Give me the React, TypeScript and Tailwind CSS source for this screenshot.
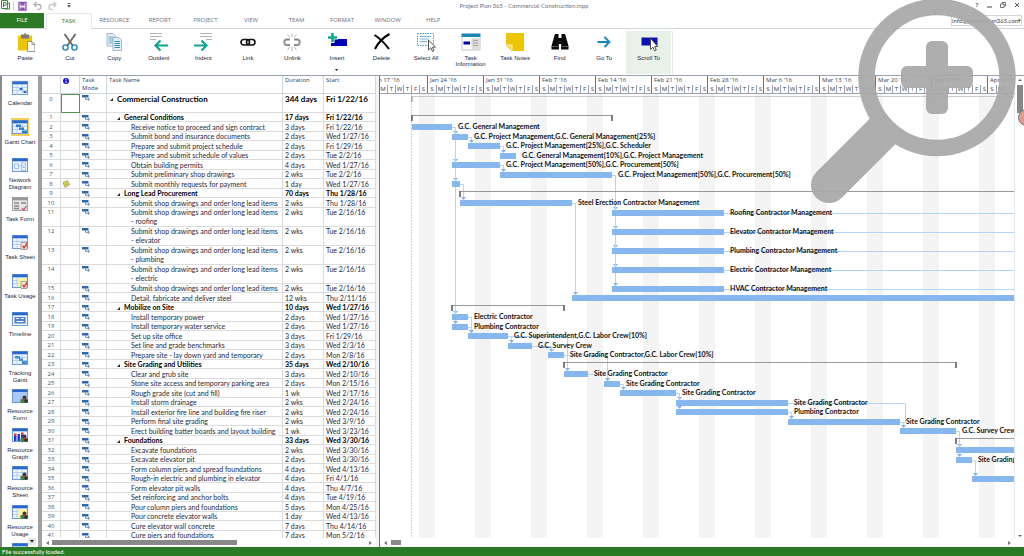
import type { ReactNode } from "react";

type Task = {
  id: number;
  name: string;
  duration: string;
  start: string;
  level: number;
  // working bar or summary bracket, in days counted from Sunday Jan 17
  from?: number;
  to?: number;
  label?: string;
};

const tasks: Task[] = [
  { id: 0, name: "Commercial Construction", duration: "344 days", start: "Fri 1/22/16", level: 0, from: 5, to: 200 },
  { id: 1, name: "General Conditions", duration: "17 days", start: "Fri 1/22/16", level: 1, from: 5, to: 30 },
  { id: 2, name: "Receive notice to proceed and sign contract", duration: "3 days", start: "Fri 1/22/16", level: 2, from: 5, to: 10, label: "G.C. General Management" },
  { id: 3, name: "Submit bond and insurance documents", duration: "2 days", start: "Wed 1/27/16", level: 2, from: 10, to: 12, label: "G.C. Project Management,G.C. General Management[25%]" },
  { id: 4, name: "Prepare and submit project schedule", duration: "2 days", start: "Fri 1/29/16", level: 2, from: 12, to: 16, label: "G.C. Project Management[25%],G.C. Scheduler" },
  { id: 5, name: "Prepare and submit schedule of values", duration: "2 days", start: "Tue 2/2/16", level: 2, from: 16, to: 18, label: "G.C. General Management[10%],G.C. Project Management" },
  { id: 6, name: "Obtain building permits", duration: "4 days", start: "Wed 1/27/16", level: 2, from: 10, to: 16, label: "G.C. Project Management[50%],G.C. Procurement[50%]" },
  { id: 7, name: "Submit preliminary shop drawings", duration: "2 wks", start: "Tue 2/2/16", level: 2, from: 16, to: 30, label: "G.C. Project Management[50%],G.C. Procurement[50%]" },
  { id: 8, name: "Submit monthly requests for payment", duration: "1 day", start: "Wed 1/27/16", level: 2, from: 10, to: 11 },
  { id: 9, name: "Long Lead Procurement", duration: "70 days", start: "Thu 1/28/16", level: 1, from: 11, to: 200 },
  { id: 10, name: "Submit shop drawings and order long lead items", duration: "2 wks", start: "Thu 1/28/16", level: 2, from: 11, to: 25, label: "Steel Erection Contractor Management" },
  { id: 11, name: "Submit shop drawings and order long lead items\n- roofing", duration: "2 wks", start: "Tue 2/16/16", level: 2, from: 30, to: 44, label: "Roofing Contractor Management" },
  { id: 12, name: "Submit shop drawings and order long lead items\n- elevator", duration: "2 wks", start: "Tue 2/16/16", level: 2, from: 30, to: 44, label: "Elevator Contractor Management" },
  { id: 13, name: "Submit shop drawings and order long lead items\n- plumbing", duration: "2 wks", start: "Tue 2/16/16", level: 2, from: 30, to: 44, label: "Plumbing Contractor Management" },
  { id: 14, name: "Submit shop drawings and order long lead items\n- electric", duration: "2 wks", start: "Tue 2/16/16", level: 2, from: 30, to: 44, label: "Electric Contractor Management" },
  { id: 15, name: "Submit shop drawings and order long lead items", duration: "2 wks", start: "Tue 2/16/16", level: 2, from: 30, to: 44, label: "HVAC Contractor Management" },
  { id: 16, name: "Detail, fabricate and deliver steel", duration: "12 wks", start: "Thu 2/11/16", level: 2, from: 25, to: 200 },
  { id: 17, name: "Mobilize on Site", duration: "10 days", start: "Wed 1/27/16", level: 1, from: 10, to: 24 },
  { id: 18, name: "Install temporary power", duration: "2 days", start: "Wed 1/27/16", level: 2, from: 10, to: 12, label: "Electric Contractor" },
  { id: 19, name: "Install temporary water service", duration: "2 days", start: "Wed 1/27/16", level: 2, from: 10, to: 12, label: "Plumbing Contractor" },
  { id: 20, name: "Set up site office", duration: "3 days", start: "Fri 1/29/16", level: 2, from: 12, to: 17, label: "G.C. Superintendent,G.C. Labor Crew[10%]" },
  { id: 21, name: "Set line and grade benchmarks", duration: "3 days", start: "Wed 2/3/16", level: 2, from: 17, to: 20, label: "G.C. Survey Crew" },
  { id: 22, name: "Prepare site - lay down yard and temporary", duration: "2 days", start: "Mon 2/8/16", level: 2, from: 22, to: 24, label: "Site Grading Contractor,G.C. Labor Crew[10%]" },
  { id: 23, name: "Site Grading and Utilities", duration: "35 days", start: "Wed 2/10/16", level: 1, from: 24, to: 73 },
  { id: 24, name: "Clear and grub site", duration: "3 days", start: "Wed 2/10/16", level: 2, from: 24, to: 27, label: "Site Grading Contractor" },
  { id: 25, name: "Stone site access and temporary parking area", duration: "2 days", start: "Mon 2/15/16", level: 2, from: 29, to: 31, label: "Site Grading Contractor" },
  { id: 26, name: "Rough grade site (cut and fill)", duration: "1 wk", start: "Wed 2/17/16", level: 2, from: 31, to: 38, label: "Site Grading Contractor" },
  { id: 27, name: "Install storm drainage", duration: "2 wks", start: "Wed 2/24/16", level: 2, from: 38, to: 52, label: "Site Grading Contractor" },
  { id: 28, name: "Install exterior fire line and building fire riser", duration: "2 wks", start: "Wed 2/24/16", level: 2, from: 38, to: 52, label: "Plumbing Contractor" },
  { id: 29, name: "Perform final site grading", duration: "2 wks", start: "Wed 3/9/16", level: 2, from: 52, to: 66, label: "Site Grading Contractor" },
  { id: 30, name: "Erect building batter boards and layout building", duration: "1 wk", start: "Wed 3/23/16", level: 2, from: 66, to: 73, label: "G.C. Survey Crew" },
  { id: 31, name: "Foundations", duration: "33 days", start: "Wed 3/30/16", level: 1, from: 73, to: 200 },
  { id: 32, name: "Excavate foundations", duration: "2 wks", start: "Wed 3/30/16", level: 2, from: 73, to: 87 },
  { id: 33, name: "Excavate elevator pit", duration: "2 days", start: "Wed 3/30/16", level: 2, from: 73, to: 75, label: "Site Grading Contractor" },
  { id: 34, name: "Form column piers and spread foundations", duration: "4 days", start: "Wed 4/13/16", level: 2 },
  { id: 35, name: "Rough-in electric and plumbing in elevator", duration: "4 days", start: "Fri 4/1/16", level: 2, from: 75, to: 81 },
  { id: 36, name: "Form elevator pit walls", duration: "4 days", start: "Thu 4/7/16", level: 2 },
  { id: 37, name: "Set reinforcing and anchor bolts", duration: "4 days", start: "Tue 4/19/16", level: 2 },
  { id: 38, name: "Pour column piers and foundations", duration: "5 days", start: "Mon 4/25/16", level: 2 },
  { id: 39, name: "Pour concrete elevator walls", duration: "1 day", start: "Wed 4/13/16", level: 2 },
  { id: 40, name: "Cure elevator wall concrete", duration: "7 days", start: "Thu 4/14/16", level: 2 },
  { id: 41, name: "Cure piers and foundations", duration: "7 days", start: "Mon 5/2/16", level: 2 },
];

// finish-to-start links between tasks
const links: [number, number][] = [
  [2, 3], [2, 6], [2, 8], [2, 18], [2, 19], [3, 4], [4, 5], [6, 7],
  [7, 11], [7, 12], [7, 13], [7, 14], [7, 15], [8, 10], [10, 16],
  [18, 20], [19, 20], [20, 21], [20, 24], [21, 22], [22, 25], [24, 25],
  [25, 26], [26, 27], [26, 28], [28, 29], [29, 30], [30, 32], [30, 33], [33, 35],
];

// the scale opens on a Monday and closes on a Tuesday
const weeks = [
  { name: "Jan 17 '16", days: "MTWTFS" },
  { name: "Jan 24 '16", days: "SMTWTFS" },
  { name: "Jan 31 '16", days: "SMTWTFS" },
  { name: "Feb 7 '16", days: "SMTWTFS" },
  { name: "Feb 14 '16", days: "SMTWTFS" },
  { name: "Feb 21 '16", days: "SMTWTFS" },
  { name: "Feb 28 '16", days: "SMTWTFS" },
  { name: "Mar 6 '16", days: "SMTWTFS" },
  { name: "Mar 13 '16", days: "SMTWTFS" },
  { name: "Mar 20 '16", days: "SMTWTFS" },
  { name: "Mar 27 '16", days: "SMTWTFS" },
  { name: "Apr 3 '16", days: "SMT" },
];

// rows alternate between 10 and 9 pixels, a wrapped name takes two of them
const rows: { top: number; height: number }[] = [];
let slot = 0;
let top = 0;
for (const task of tasks) {
  const lines = task.id === 0 || task.name.includes("\n") ? 2 : 1;
  const height = lines === 2 ? 19 : slot % 2 === 0 ? 9 : 10;
  if (task.id !== 0) slot += lines;
  rows.push({ top, height });
  top += height;
}

const dayX = (day: number) => day * 8 - 8;
const barY = (id: number) => rows[id].top + 2;

function ModeIcon() {
  return (
    <svg className="block h-[6px] w-2" viewBox="0 0 8 6">
      <path d="M0 0h6.500v2.500H0z" fill="#2f6aa8" />
      <path d="M3.500 2.500v1.800h3.500M5.800 2.800 7.500 4.300 5.800 5.800" fill="none" stroke="#4a6f93" strokeWidth="0.8" />
    </svg>
  );
}

function NoteIcon() {
  return (
    <svg className="block h-2 w-2" viewBox="0 0 8 8">
      <path d="M1 2.400 5.400.600 7.400 4.800 3 7.400z" fill="#e6e060" stroke="#8d8a2a" strokeWidth="0.7" />
      <path d="M2.600 3.400 5 2.400M3.200 5 5.600 3.900" stroke="#8d8a2a" strokeWidth="0.6" />
    </svg>
  );
}

function ToolIcon({ children }: { children: ReactNode }) {
  return (
    <svg className="block h-5 w-5" viewBox="0 0 20 20" fill="none">
      {children}
    </svg>
  );
}

const tools: { name: string; icon: ReactNode; menu?: boolean; active?: boolean }[] = [
  {
    name: "Paste",
    icon: (
      <>
        <path d="M3 3.500h14v15H3z" fill="#ecc600" />
        <path d="M6 2.500h2.500L10 1l1.500 1.500H14v4H6z" fill="#7b7b7b" />
        <path d="M12.500 9.500h4.500l3 3v7h-7.500z" fill="#fff" stroke="#7d7d7d" strokeWidth="0.8" />
        <path d="M17 9.500v3h3" stroke="#7d7d7d" strokeWidth="0.8" />
      </>
    ),
  },
  {
    name: "Cut",
    icon: (
      <>
        <path d="M4.500 2 13 14M15.500 2 7 14" stroke="#6e6e6e" strokeWidth="2" />
        <circle cx="5.500" cy="15.500" r="2.600" stroke="#1e84b8" strokeWidth="1.400" />
        <circle cx="14.500" cy="15.500" r="2.600" stroke="#1e84b8" strokeWidth="1.400" />
      </>
    ),
  },
  {
    name: "Copy",
    icon: (
      <>
        <path d="M3 1.500h6l2.500 2.500v10H3z" fill="#e4f0f8" stroke="#8fa9b8" strokeWidth="0.8" />
        <path d="M4.500 5h5M4.500 7h5M4.500 9h5M4.500 11h4" stroke="#4c9cc6" strokeWidth="0.8" />
        <path d="M9 5.500h6l2.500 2.500v10.500H9z" fill="#e4f0f8" stroke="#8fa9b8" strokeWidth="0.8" />
        <path d="M10.500 9.500h5.500M10.500 11.500h5.500M10.500 13.500h5.500M10.500 15.500h5.500" stroke="#1e84b8" strokeWidth="0.9" />
      </>
    ),
  },
  {
    name: "Outdent",
    icon: (
      <>
        <path d="M1 1.500h12M1 4.500h12M1 7.500h6" stroke="#b5b5b5" strokeWidth="1" />
        <path d="M19 13.500H6.500M11.500 8.500l-5 5 5 5" stroke="#0fa594" strokeWidth="2.200" />
      </>
    ),
  },
  {
    name: "Indent",
    icon: (
      <>
        <path d="M7 1.500h12M7 4.500h12M13 7.500h6" stroke="#b5b5b5" strokeWidth="1" />
        <path d="M1 13.500h12.500M8.500 8.500l5 5-5 5" stroke="#0fa594" strokeWidth="2.200" />
      </>
    ),
  },
  {
    name: "Link",
    icon: (
      <>
        <rect x="3" y="7.500" width="8.500" height="5.500" rx="2.700" stroke="#111" strokeWidth="1.700" />
        <rect x="8.500" y="7.500" width="8.500" height="5.500" rx="2.700" stroke="#111" strokeWidth="1.700" />
      </>
    ),
  },
  {
    name: "Unlink",
    icon: (
      <>
        <path d="M8 7.500H5a2.700 2.700 0 0 0 0 5.500h3M12 7.500h3a2.700 2.700 0 0 1 0 5.500h-3" stroke="#8c8c8c" strokeWidth="1.800" />
        <path d="M10 1.500v4M10 15v4M5.500 2.500l2 3M14.500 2.500l-2 3M5.500 18l2-3M14.500 18l-2-3" stroke="#a5a5a5" strokeWidth="0.800" />
      </>
    ),
  },
  {
    name: "Insert",
    menu: true,
    icon: (
      <>
        <path d="M4 7h16v7H4z" fill="#0000b4" />
        <path d="M5.500 0v11M0 5.500h11" stroke="#fff" strokeWidth="4" />
        <path d="M5.500 1v9M1 5.500h9" stroke="#0fa594" strokeWidth="2.600" />
      </>
    ),
  },
  {
    name: "Delete",
    icon: <path d="M2.500 3c5 3 10 8 14.500 14M17.500 2C12 5 6 11 3 17" stroke="#000" strokeWidth="2" />,
  },
  {
    name: "Select All",
    icon: (
      <>
        <path d="M1.500 1.500h16v12h-16z" stroke="#2b93c0" strokeWidth="0.9" strokeDasharray="1.500 1" />
        <path d="M4 4.500h11M4 7h9M4 9.500h7" stroke="#5fb0d4" strokeWidth="0.9" />
        <path d="M12.500 8v10l2.300-2.200 1.600 3.600 1.600-.8-1.600-3.400h3.100z" fill="#fff" stroke="#444" strokeWidth="0.9" />
      </>
    ),
  },
  {
    name: "Task Information",
    icon: (
      <>
        <path d="M1 2h18v16H1z" fill="#fff" stroke="#b5b5b5" strokeWidth="0.8" />
        <path d="M.6 1.600h18.800v3.400H.6z" fill="#1786bb" />
        <path d="M10.500 6h8v11.500h-8z" fill="#dcdcdc" />
        <path d="M2.500 9.500H9v3H2.500z" fill="#0000b4" />
        <path d="M12 8.500h5M12 11h5M12 13.500h5" stroke="#999" strokeWidth="0.8" />
      </>
    ),
  },
  {
    name: "Task Notes",
    icon: (
      <>
        <path d="M1 1h18v18H6.500L1 13.500z" fill="#ecc600" />
        <path d="M1.500 13h5.500v5.500" fill="#f6de5c" stroke="#fff" strokeWidth="0.800" />
      </>
    ),
  },
  {
    name: "Find",
    icon: (
      <>
        <path d="M5 2h3.500v3l.5 12.500H1.500V14L4 5zM15 2h-3.500v3l-.5 12.500h7.500V14L16 5z" fill="#0a0a0a" />
        <path d="M8 6h4v6H8z" fill="#0a0a0a" />
        <path d="M2 14.500h6.500M11.500 14.500H18" stroke="#777" strokeWidth="0.700" />
      </>
    ),
  },
  {
    name: "Go To",
    icon: <path d="M3.500 10h12M10.500 5l5 5-5 5" stroke="#1786bb" strokeWidth="1.800" />,
  },
  {
    name: "Scroll To",
    active: true,
    icon: (
      <>
        <path d="M2.500 5.500h16v8h-16z" fill="#0c12b4" />
        <path d="M11.500 6.500v11l2.400-2.300 1.700 3.600 1.700-.8-1.700-3.500h3.200z" fill="#fff" stroke="#444" strokeWidth="0.9" />
      </>
    ),
  },
];

const tabs = ["TASK", "RESOURCE", "REPORT", "PROJECT", "VIEW", "TEAM", "FORMAT", "WINDOW", "HELP"];

function ViewWindow({ muted, children }: { muted?: boolean; children?: ReactNode }) {
  return (
    <svg className="block h-[16px] w-[16px] shrink-0" viewBox="0 0 16 16" fill="none">
      <rect x="0.5" y="1.500" width="15" height="13" fill={muted ? "#e4e4e4" : "#eef5ff"} stroke={muted ? "#9a9a9a" : "#5f92d8"} strokeWidth="0.9" />
      <path d="M.5 1.500h15v2.800H.5z" fill={muted ? "#9a9a9a" : "#2867cc"} />
      {children}
    </svg>
  );
}

const gridLines = <path d="M1 7.500h14M1 10.500h14M5 4.500v10M10 4.500v10" stroke="#a8c6f0" strokeWidth="0.8" />;

const redCheck = (
  <>
    <path d="M9 8.500h6v7H9z" fill="#f3efe4" stroke="#8f7c6a" strokeWidth="0.700" />
    <path d="m10.500 11.500 1.500 2.500 3-4.500" stroke="#d8382c" strokeWidth="1.400" />
  </>
);

const people = (
  <>
    <circle cx="12.500" cy="9.500" r="2" fill="#3a3a3a" />
    <circle cx="10.500" cy="13" r="2.300" fill="#3e8a3a" />
    <circle cx="14" cy="13" r="2" fill="#333" />
    <circle cx="12.200" cy="11.500" r="1" fill="#c23a2e" />
  </>
);

const views: { name: string; icon: ReactNode; active?: boolean }[] = [
  {
    name: "Calendar",
    icon: (
      <ViewWindow>
        {gridLines}
        <path d="M3 .5v2M6 .5v2M9 .5v2M12 .5v2" stroke="#7f9cc8" strokeWidth="1" />
        <path d="M7.500 8h3v2h-3zM11.500 11h3v2h-3z" fill="#2867cc" />
      </ViewWindow>
    ),
  },
  {
    name: "Gantt Chart",
    active: true,
    icon: (
      <ViewWindow>
        {gridLines}
        <path d="M4 5.500h5v2.500H4zM7 8.500h5V11H7zM10 11.500h5V14h-5z" fill="#2f7fd0" />
      </ViewWindow>
    ),
  },
  {
    name: "Network Diagram",
    icon: (
      <ViewWindow>
        <path d="M2.500 7h4v4.500h-4zM9.500 6h4v3h-4zM9.500 10.500h4v3h-4zM6.500 9h3" stroke="#8db4ea" strokeWidth="0.8" />
      </ViewWindow>
    ),
  },
  {
    name: "Task Form",
    icon: (
      <ViewWindow muted>
        <path d="M2 7h5M9 7h5M2 10h5M2 12.500h5" stroke="#8a8a8a" strokeWidth="1.500" />
        <path d="m10 12 1.500 2 3-4" stroke="#c2485a" strokeWidth="1.200" />
      </ViewWindow>
    ),
  },
  { name: "Task Sheet", icon: <ViewWindow>{gridLines}{redCheck}</ViewWindow> },
  {
    name: "Task Usage",
    icon: (
      <ViewWindow>
        {gridLines}
        <path d="M6 5h9v9H6z" fill="#f8f4ac" />
        {redCheck}
      </ViewWindow>
    ),
  },
  {
    name: "Timeline",
    icon: (
      <ViewWindow>
        <path d="M2.500 6h11v6.500h-11z" fill="#4f7fc4" />
        <path d="M4 7.500h3M9 7.500h3M4.500 10.500h7" stroke="#fff" strokeWidth="1.200" />
      </ViewWindow>
    ),
  },
  {
    name: "Tracking Gantt",
    icon: (
      <ViewWindow>
        {gridLines}
        <path d="M3 6h5v2.500H3zM7 8.500h4V11H7zM10 11h5v3h-5z" fill="#3f8fdc" />
      </ViewWindow>
    ),
  },
  {
    name: "Resource Form",
    icon: (
      <ViewWindow>
        <path d="M1 5h14v9H1z" fill="#a9c8f4" />
        {people}
      </ViewWindow>
    ),
  },
  {
    name: "Resource Graph",
    icon: (
      <ViewWindow>
        <path d="M2 9h2.500v5H2zM5.500 7H8v7H5.500zM9 8h2.500v6H9z" fill="#1c3fd0" />
        <path d="M2 6.500h2.500V9H2zM9 5.500h2.500V8H9z" fill="#e0342c" />
        {people}
      </ViewWindow>
    ),
  },
  { name: "Resource Sheet", icon: <ViewWindow>{gridLines}{people}</ViewWindow> },
  {
    name: "Resource Usage",
    icon: (
      <ViewWindow>
        {gridLines}
        <path d="M6 5h9v9H6z" fill="#f8f4ac" />
        {people}
      </ViewWindow>
    ),
  },
  { name: "", icon: <ViewWindow /> },
];

function TitleBar() {
  return (
    <header className="flex h-[13px] shrink-0 items-start justify-between">
      <div className="flex w-[90px] items-center">
        <svg className="ml-px h-[11px] w-[9px]" viewBox="0 0 9 11" fill="none">
          <path d="M.5.500h6v8h-6z" fill="#fff" stroke="#3f8d45" />
          <path d="M2.500 7V2.500h1.500a1.300 1.300 0 0 1 0 2.700H2.500M6.500 3h2v6h-5" stroke="#2b7a26" strokeWidth="0.900" />
        </svg>
        <span className="ml-[3px] h-[9px] w-px bg-gray-300" />
        <button aria-label="Save" className="ml-1">
          <svg className="block h-[10px] w-[9px]" viewBox="0 0 9 10" fill="none">
            <path d="M1 1.500h7v7.500H1z" fill="#f2ebf8" stroke="#8c50b4" strokeWidth="1.300" />
            <path d="M2.500 1.500h4v3h-4zM2.500 6.500h4V9h-4z" fill="#8c50b4" />
          </svg>
        </button>
        <button aria-label="Undo" className="ml-1.5">
          <svg className="block h-[10px] w-[9px]" viewBox="0 0 9 10" fill="none" stroke="#b4b4b4" strokeWidth="1.300">
            <path d="M3.500 1 1 3.500 3.500 6M1 3.500h4.500a2.500 2.500 0 0 1 0 5H4.500" />
          </svg>
        </button>
        <button aria-label="Redo" className="ml-1.5">
          <svg className="block h-[10px] w-[9px]" viewBox="0 0 9 10" fill="none" stroke="#c8c8c8" strokeWidth="1.300">
            <path d="M5.500 1 8 3.500 5.500 6M8 3.500H3.500a2.500 2.500 0 0 0 0 5h1" />
          </svg>
        </button>
        <button aria-label="Customize toolbar" className="ml-2.5">
          <svg className="block h-[5px] w-[4px]" viewBox="0 0 4 5">
            <path d="M.5 0h3v.800h-3zM0 2.200h4L2 4.500z" fill="#444" />
          </svg>
        </button>
      </div>
      <h1 className="font-['Lato',sans-serif] text-[6px] leading-[11px] text-gray-500">Project Plan 365 - Commercial Construction.mpp</h1>
      <div className="flex w-[66px] items-center justify-end gap-2 pr-1 text-gray-500">
        <button aria-label="Help" className="w-1 text-[6px] leading-[10px] font-bold">?</button>
        <button aria-label="Minimize">
          <svg className="block h-[6px] w-[5px]" viewBox="0 0 5 6"><path d="M0 5h5" stroke="#444" /></svg>
        </button>
        <button aria-label="Restore">
          <svg className="block h-[6px] w-[6px]" viewBox="0 0 6 6" fill="none" stroke="#555" strokeWidth="0.800">
            <path d="M.5 2h3.500v3.500H.5zM2 2V.500h3.500V4H4" />
          </svg>
        </button>
        <button aria-label="Close">
          <svg className="block h-[6px] w-[6px]" viewBox="0 0 6 6" stroke="#444" strokeWidth="0.900"><path d="M1 1l4 4M5 1 1 5" /></svg>
        </button>
      </div>
    </header>
  );
}

function TabBar() {
  return (
    <nav className="flex h-4 shrink-0 items-stretch border-b border-gray-300 text-[6px]">
      <button className="w-11 bg-[#2b7a26] text-white">FILE</button>
      <div className="ml-0.5 grid w-[410px] grid-cols-9">
        {tabs.map((tab) => (
          <button
            key={tab}
            className={
              tab === "TASK"
                ? "-mb-px border-x border-t border-gray-200 bg-white text-[#2b7a26]"
                : "text-gray-500"
            }
          >
            {tab}
          </button>
        ))}
      </div>
      <div className="flex-1" />
      <div className="relative mt-0.5 mr-0.5 h-[11px] w-[71px]">
        <select aria-label="Account" className="block h-full w-full appearance-none border border-gray-300 bg-white font-['Lato',sans-serif] text-[6px] leading-[9px] text-gray-700">
          <option>info@projectplan365.com</option>
        </select>
        <svg className="pointer-events-none absolute top-1 right-px h-[3px] w-[3px]" viewBox="0 0 4 3"><path d="M0 0h4L2 2.500z" fill="#333" /></svg>
      </div>
    </nav>
  );
}

function Ribbon() {
  return (
    <div className="flex h-[47px] shrink-0 border-b border-gray-400 pt-0.5 pb-px pl-[3px]">
      <div className="grid w-[668px] grid-cols-15">
        {tools.map((tool) => (
          <button
            key={tool.name}
            className={
              tool.active
                ? "flex flex-col items-center bg-[#e8f2e8] pt-px text-gray-800"
                : "flex flex-col items-center pt-px text-gray-800"
            }
          >
            <ToolIcon>{tool.icon}</ToolIcon>
            <span className="mt-[3px] w-9 font-['Liberation_Sans',sans-serif] text-[6px] leading-[6px]">{tool.name}</span>
            {tool.menu && (
              <svg className="mt-2 h-[2px] w-[3px]" viewBox="0 0 3 2"><path d="M0 0h3L1.500 2z" fill="#111" /></svg>
            )}
          </button>
        ))}
      </div>
      <span className="ml-px w-px bg-gray-200" />
    </div>
  );
}

function ViewBar() {
  return (
    <aside className="relative flex w-[42px] shrink-0 flex-col overflow-hidden border-r-4 border-l-2 border-r-[#a0a0a0] border-l-[#8a8a8a] bg-white pt-[3px]">
      {views.map((view, i) => (
        <button key={i} className="flex shrink-0 flex-col items-center odd:h-[39px] even:h-[38px]">
          <span className={view.active ? "bg-[#f6cf58] p-px" : "p-px"}>{view.icon}</span>
          <span className="mt-[3px] w-9 font-['Liberation_Sans',sans-serif] text-[6px] leading-[7px] text-gray-800">{view.name}</span>
        </button>
      ))}
      <button aria-label="More views" className="absolute right-0.5 bottom-0.5 flex h-[7px] w-[8px] items-center justify-center bg-gray-200">
        <svg className="h-[3px] w-[4px]" viewBox="0 0 4 3"><path d="M0 0h4L2 2.500z" fill="#111" /></svg>
      </button>
    </aside>
  );
}

function TaskTable() {
  const head = "border-r border-b border-gray-300 px-0.5 text-left align-top text-[6px] font-normal leading-[8px] text-gray-700";
  const cell = "border-r border-b border-[#dcdcdc] py-0 whitespace-pre";
  return (
    <div className="flex w-[334px] shrink-0 flex-col">
      <div className="min-h-0 flex-1 overflow-hidden">
        <table className="w-full table-fixed border-separate border-spacing-0 font-['Lato',sans-serif] text-[7px]">
          <colgroup>
            <col className="w-[19px]" />
            <col className="w-[19px]" />
            <col className="w-[27px]" />
            <col className="w-[176px]" />
            <col className="w-[41px]" />
            <col className="w-[52px]" />
          </colgroup>
          <thead className="font-['Open_Sans',sans-serif]">
            <tr className="h-[18px]">
              <th className={head} aria-label="ID" />
              <th className={head}>
                <svg className="mt-0.5 block h-[6px] w-[6px]" viewBox="0 0 6 6">
                  <circle cx="3" cy="3" r="3" fill="#1212d8" />
                  <path d="M3 1v1M3 2.600V5" stroke="#fff" strokeWidth="1" />
                </svg>
              </th>
              <th className={head}>Task Mode</th>
              <th className={head}>Task Name</th>
              <th className={head}>Duration</th>
              <th className={head}>Start</th>
            </tr>
          </thead>
          <tbody>
            {tasks.map((task, i) => {
              const first = task.level === 0;
              const weight = task.level < 2 ? "font-bold text-black" : "text-gray-800";
              const lead = first ? "align-top leading-[11px]" : rows[i].height === 19 ? "align-top leading-[9px]" : "align-middle leading-[8px]";
              const size = first ? "text-[8px]" : "text-[7px]";
              return (
                <tr key={task.id} style={{ height: rows[i].height }}>
                  <td className={`${cell} ${lead} text-center font-['Open_Sans',sans-serif] text-[6px] text-gray-600`}>{task.id}</td>
                  <td className={first ? "border border-[#4f9450]" : `${cell} ${lead} pl-px`}>{task.id === 8 && <NoteIcon />}</td>
                  <td className={`${cell} ${lead} pt-px pl-0.5`}><ModeIcon /></td>
                  <td className={`${cell} ${lead} ${size} ${weight} ${first ? "pl-[3px]" : task.level === 1 ? "pl-[10px]" : "pl-[24px]"}`}>
                    {task.level < 2 && (
                      <svg className="mr-1 inline-block h-[3px] w-[3px] align-middle" viewBox="0 0 3 3"><path d="M3 0v3H0z" fill="#222" /></svg>
                    )}
                    {task.name}
                  </td>
                  <td className={`${cell} ${lead} ${size} ${weight} pl-0.5`}>{task.duration}</td>
                  <td className={`${cell} ${lead} ${size} ${weight} pl-0.5`}>{task.start}</td>
                </tr>
              );
            })}
          </tbody>
        </table>
      </div>
      <div className="flex h-[9px] shrink-0 items-center gap-[3px] px-1">
        <svg className="h-[4px] w-[3px]" viewBox="0 0 3 4"><path d="M3 0v4L0 2z" fill="#777" /></svg>
        <span className="h-[5px] w-[185px] bg-[#888]" />
        <span className="flex-1" />
        <svg className="h-[4px] w-[3px]" viewBox="0 0 3 4"><path d="M0 0v4l3-2z" fill="#777" /></svg>
      </div>
    </div>
  );
}

function Link({ from, to }: { from: number; to: number }) {
  const x1 = dayX(tasks[from].to ?? 0);
  const x2 = dayX(tasks[to].from ?? 0) + 3;
  const y1 = barY(from) + 3;
  const y2 = barY(to);
  return (
    <>
      <path d={`M${x1} ${y1 + 0.5}H${x2 + 0.5}V${y2 - 2}`} fill="none" stroke="#b4d4f8" />
      <path d={`M${x2 - 2} ${y2 - 3}h5l-2.5 3z`} fill="#7fb3ee" />
    </>
  );
}

function GanttChart() {
  return (
    <div className="flex min-w-0 flex-1 flex-col overflow-hidden border-l border-gray-500">
      <div className="h-[18px] shrink-0 overflow-hidden border-b border-gray-400">
        <div className="-ml-px flex text-[6px] text-gray-700">
          {weeks.map((week, w) => (
            <div key={week.name} className={w === 0 ? "w-12 shrink-0" : "w-14 shrink-0 border-l border-gray-500 last:w-7"}>
              <div className={w === 0 ? "-ml-[6px] h-[9px] leading-[9px] whitespace-nowrap" : "h-[9px] pl-0.5 leading-[9px] whitespace-nowrap"}>
                {week.name}
              </div>
              <div className="flex h-2 text-center leading-[8px]">
                {week.days.split("").map((letter, i) => (
                  <span key={i} className="w-2 shrink-0 border-l border-gray-400 first:border-l-0">{letter}</span>
                ))}
              </div>
            </div>
          ))}
        </div>
      </div>
      <svg className="block min-h-0 w-full flex-1 border-r border-gray-200 font-['Lato',sans-serif] text-[7px] font-bold" role="img" aria-label="Gantt chart">
        {weeks.map((week, i) => (
          <rect key={week.name} x={i * 56 + 39} y="0" width="16" height="100%" fill="#f4f4f4" />
        ))}
        <path d="M31.500 0v600" stroke="#d2d2d2" strokeDasharray="2 1" />
        {links.map(([from, to]) => (
          <Link key={`${from}-${to}`} from={from} to={to} />
        ))}
        <path
          d={`M${dayX(52)} ${barY(27) + 3.5}H${dayX(66) + 5.5}V${barY(29) + 3.5}H${dayX(66) + 2}`}
          fill="none"
          stroke="#b4d4f8"
        />
        {[11, 12, 13, 14, 15].map((id) => (
          <line key={id} x1={dayX(44)} x2="100%" y1={barY(id) + 3.5} y2={barY(id) + 3.5} stroke="#b4d4f8" />
        ))}
        {tasks.map((task) => {
          if (task.from === undefined || task.to === undefined) return null;
          const x = dayX(task.from);
          const y = barY(task.id);
          const width = dayX(task.to) - x;
          if (task.level < 2) {
            return (
              <g key={task.id} opacity={task.level === 0 ? 0.5 : 1}>
                <path d={`M${x} ${y + 0.5}h${width}`} stroke="#999" />
                <path d={`M${x} ${y}v6M${x + width} ${y}v6`} stroke="#555" strokeWidth="1.500" />
              </g>
            );
          }
          return (
            <g key={task.id}>
              <rect x={x} y={y} width={width} height="6" fill="#86b7ee" />
              {task.label && (
                <text x={x + width + 6} y={y + 5} fill="#111">{task.label}</text>
              )}
            </g>
          );
        })}
      </svg>
      <div className="flex h-[9px] shrink-0 items-center gap-1 px-1">
        <svg className="h-[4px] w-[3px]" viewBox="0 0 3 4"><path d="M3 0v4L0 2z" fill="#777" /></svg>
        <span className="h-[5px] w-[10px] bg-[#888]" />
        <span className="flex-1" />
        <svg className="h-[4px] w-[3px]" viewBox="0 0 3 4"><path d="M0 0v4l3-2z" fill="#777" /></svg>
      </div>
    </div>
  );
}

function VerticalScrollbar() {
  return (
    <div className="relative flex w-[9px] shrink-0 flex-col items-center overflow-hidden pt-[3px] pb-2.5">
      <svg className="h-[2px] w-[4px]" viewBox="0 0 4 2"><path d="M0 2h4L2 0z" fill="#666" /></svg>
      <span className="mt-1 h-[28px] w-[6px] bg-[#888]" />
      <span className="flex-1" />
      <svg className="h-[2px] w-[4px]" viewBox="0 0 4 2"><path d="M0 0h4L2 2z" fill="#666" /></svg>
      <span className="absolute top-[33px] left-[3px] h-[17px] w-[17px] rounded-full border border-gray-500 bg-[#e49a90]" />
    </div>
  );
}

function Magnifier() {
  return (
    <svg className="pointer-events-none absolute top-0 right-0 h-[210px] w-[224px]" viewBox="800 0 224 210" fill="none" aria-hidden="true">
      <g opacity="0.94" stroke="#a9a9a9">
        <circle cx="937" cy="77.500" r="70.500" strokeWidth="16.500" />
        <path d="M829 185 884 130" strokeWidth="36" />
        <circle cx="829" cy="185" r="18" fill="#a9a9a9" stroke="none" />
        <rect x="926" y="41" width="22" height="73" rx="6" fill="#a9a9a9" stroke="none" />
        <rect x="901" y="66" width="72" height="22" rx="6" fill="#a9a9a9" stroke="none" />
      </g>
    </svg>
  );
}

export default function App() {
  return (
    <div className="relative flex h-screen flex-col overflow-hidden bg-white font-['Open_Sans','Noto_Sans',sans-serif]">
      <TitleBar />
      <TabBar />
      <Ribbon />
      <main className="flex min-h-0 flex-1">
        <ViewBar />
        <TaskTable />
        <div className="w-[3px] shrink-0 bg-gray-100" />
        <GanttChart />
        <VerticalScrollbar />
      </main>
      <footer className="h-[9px] shrink-0 bg-[#2b7a26] pl-0.5 font-['Lato',sans-serif] text-[6px] leading-[9px] text-white">File successfully loaded.</footer>
      <Magnifier />
    </div>
  );
}
